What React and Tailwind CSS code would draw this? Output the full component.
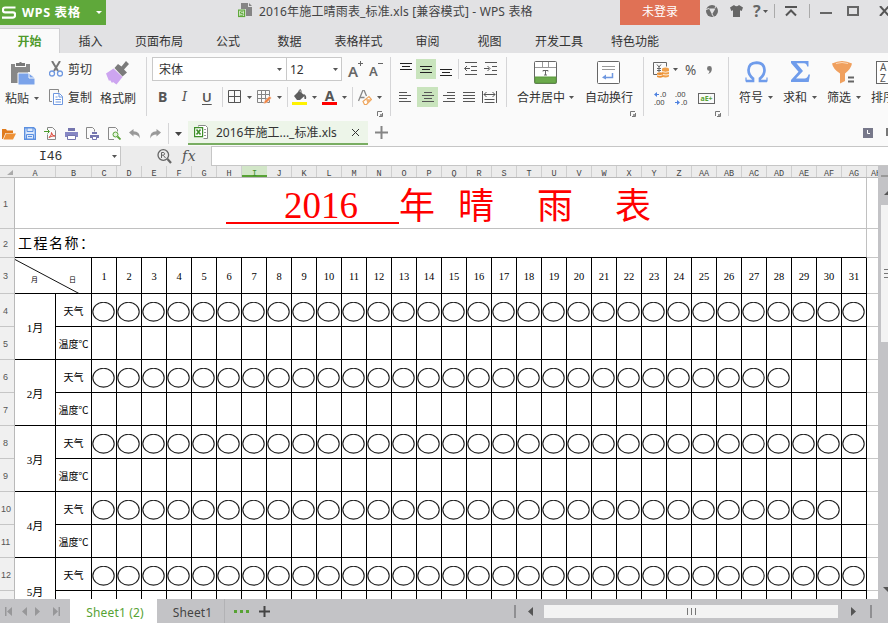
import clsx from 'clsx'

const MENU = [
  ['插入', 'w-[61px]'],
  ['页面布局', 'w-[76px]'],
  ['公式', 'w-[62px]'],
  ['数据', 'w-[61px]'],
  ['表格样式', 'w-[77px]'],
  ['审阅', 'w-[61px]'],
  ['视图', 'w-[63px]'],
  ['开发工具', 'w-[76px]'],
  ['特色功能', 'w-[76px]'],
]

const DAYS = Array.from({ length: 31 }, (_, i) => i + 1)

const LETTERS = [
  'C','D','E','F','G','H','I','J','K','L','M','N','O','P','Q','R','S','T',
  'U','V','W','X','Y','Z','AA','AB','AC','AD','AE','AF','AG',
]

const MONTHS = [
  { name: '1月', days: 31 },
  { name: '2月', days: 28 },
  { name: '3月', days: 31 },
  { name: '4月', days: 30 },
  { name: '5月', days: 31 },
]

const ROWS = [
  [1, 'h-[51px]'], [2, 'h-[29px]'], [3, 'h-[36px]'],
  ...[4, 5, 6, 7, 8, 9, 10, 11, 12].map(n => [n, 'h-[33px]']),
]

const Caret = ({ className }) => (
  <svg className={clsx('shrink-0', className)} width="5" height="3" viewBox="0 0 5 3"><path d="M0 0h5L2.5 3z" fill="#555"/></svg>
)

const Sep = ({ className }) => <div className={clsx('w-px shrink-0', className)}/>

const Corner = ({ className }) => (
  <svg className={clsx('shrink-0', className)} width="6" height="6" viewBox="0 0 6 6" fill="none" stroke="#777">
    <path d="M.5 5V.5H5M5.5 2v3.5H2"/><path d="M3 3h2v2H3z" fill="#999" stroke="none"/>
  </svg>
)

// horizontal strokes, each entry is [x, y, length]
const Lines = ({ rows, className, w = 13, h = 12, thick = 1, color = '#555', children }) => (
  <svg className={clsx('shrink-0', className)} width={w} height={h} viewBox={`0 0 ${w} ${h}`}>
    {rows.map(([x, y, len]) => <rect key={y + '-' + x} x={x} y={y} width={len} height={thick} fill={color}/>)}
    {children}
  </svg>
)

function TitleBar() {
  return (
    <div className="flex h-[28px] items-start">
      <div className="flex h-[25px] w-[106px] shrink-0 items-center bg-[#5fa83a] text-white">
        <svg className="ml-[2px] shrink-0" width="14" height="13" viewBox="0 0 14 13" fill="none" stroke="#fff" strokeWidth="2.2">
          <path d="M13.5 1.5H3Q1 1.5 1 3.5V4.5Q1 6.3 3 6.3H11Q13 6.3 13 8V9.5Q13 11.6 11 11.6H0"/>
        </svg>
        <span className="ml-[6px] w-[66px] shrink-0 whitespace-nowrap text-[12.5px] font-bold leading-[24px] tracking-[0.65px]">WPS 表格</span>
        <svg className="ml-[8px]" width="6" height="3" viewBox="0 0 6 3"><path d="M0 0h6L3 3z" fill="#fff"/></svg>
      </div>
      <svg className="ml-[132px] mt-[3px] shrink-0" width="15" height="15" viewBox="0 0 15 15">
        <path d="M3 0h7v4h4v9H8V6H3z" fill="#858585"/>
        <path d="M11 0l3 3h-3z" fill="#858585"/>
        <rect x=".6" y="7.1" width="6" height="6.4" fill="#e8f3e2" stroke="#5fa83a" strokeWidth="1.2"/>
        <path d="M5.5 8.8H2.5v1.6h2.5v1.8H1.8" fill="none" stroke="#5fa83a"/>
      </svg>
      <span className="ml-[6px] w-[361px] shrink-0 whitespace-nowrap text-[12px] leading-[23px] tracking-[0.16px] text-[#444]">2016年施工晴雨表_标准.xls [兼容模式] - WPS 表格</span>
      <div className="h-[25px] w-[80px] shrink-0 bg-[#e07155] text-center text-[12px] leading-[23px] text-white">未登录</div>
      <svg className="ml-[6px] mt-[5px] shrink-0" width="12" height="12" viewBox="0 0 12 12">
        <circle cx="6" cy="6" r="6" fill="#6d6d6d"/>
        <path d="M3 3.500h6.500L6 9.500z" fill="#e2e2e4"/>
        <path d="M0 4.500l3-1M9 3l1-2M6 9l1.500 2.500" stroke="#e2e2e4"/>
      </svg>
      <svg className="ml-[12px] mt-[5px] shrink-0" width="13" height="12" viewBox="0 0 13 12">
        <path d="M4 0Q6.500 2.400 9 0L13 2.500 11.700 6 10 5.300V12H3V5.300L1.300 6 0 2.500z" fill="#666"/>
      </svg>
      <span className="ml-[10px] w-[10px] shrink-0 text-[16px] font-bold leading-[23px] text-[#666]">?</span>
      <Caret className="mt-[10px]"/>
      <Sep className="ml-[6px] mt-[4px] h-[14px] bg-[#aaa]"/>
      <svg className="ml-[10px] mt-[6px] shrink-0" width="12" height="11" viewBox="0 0 12 11" fill="none" stroke="#555">
        <path d="M0 1h12" strokeWidth="2"/><path d="M1 9.500L6 4.500l5 5" strokeWidth="2"/>
      </svg>
      <Sep className="ml-[12px] mt-[4px] h-[14px] bg-[#aaa]"/>
      <div className="ml-[10px] mt-[12px] h-[2px] w-[12px] shrink-0 bg-[#666]"/>
      <div className="ml-[15px] mt-[6px] h-[10px] w-[12px] shrink-0 border-2 border-[#666]"/>
      <svg className="ml-[20px] mt-[6px] shrink-0" width="11" height="10" viewBox="0 0 11 10" stroke="#555" strokeWidth="2"><path d="M1 0l9 10M10 0L1 10"/></svg>
    </div>
  )
}

function MenuBar() {
  return (
    <div className="flex h-[25px] text-[12px] leading-[28px] text-[#333]">
      <div className="w-[60px] shrink-0 border-r border-t border-[#cfcfd1] bg-[#fafafa] text-center font-bold leading-[26px] text-[#4f9a2c]">开始</div>
      {MENU.map(([label, w]) => (
        <div key={label} className={clsx('shrink-0 whitespace-nowrap text-center', w)}>{label}</div>
      ))}
    </div>
  )
}

function ClipboardGroup() {
  return (
    <div className="flex w-[146px] shrink-0">
      <div className="w-[43px] shrink-0">
        <svg className="ml-[10px] mt-[9px]" width="26" height="24" viewBox="0 0 26 24">
          <path d="M1 2h4v3h11V2h4v8h-2v11H1z" fill="#878787"/>
          <path d="M6 1h3q1.500-2 3 0h3v3H6z" fill="#777"/>
          <path d="M8 11h11l6 5v7H8z" fill="#7ba3ea" stroke="#fafafa"/>
          <path d="M19 11v5h6" fill="none" stroke="#fafafa"/>
        </svg>
        <div className="ml-[5px] flex items-center text-[12px] leading-[25px]">粘贴<Caret className="ml-[5px]"/></div>
      </div>
      <div className="ml-[6px] w-[50px] shrink-0">
        <div className="mt-[5px] flex h-[22px] items-center text-[12px]">
          <svg width="14" height="16" viewBox="0 0 14 16" fill="none">
            <path d="M3 0l6 10M11 0L5 10" stroke="#777" strokeWidth="2"/>
            <circle cx="3" cy="12.500" r="2.500" stroke="#6f98e0" strokeWidth="1.300"/>
            <circle cx="11" cy="12.500" r="2.500" stroke="#6f98e0" strokeWidth="1.300"/>
          </svg>
          <span className="ml-[5px] pt-px">剪切</span>
        </div>
        <div className="mt-[6px] flex h-[23px] items-center text-[12px]">
          <svg width="15" height="17" viewBox="0 0 15 17" fill="none">
            <path d="M3 12.500H.5V.5h9v3" stroke="#888"/>
            <path d="M4.500 4.500h6l3 3v8h-9z" fill="#fff" stroke="#6f98e0"/>
            <path d="M10 4.500v3.500h3.500M6.500 8h2M6.500 10.500h5.500M6.500 13h5.500" stroke="#6f98e0"/>
          </svg>
          <span className="ml-[4px] pt-px">复制</span>
        </div>
      </div>
      <div className="w-[38px] shrink-0">
        <svg className="ml-[7px] mt-[8px]" width="24" height="24" viewBox="0 0 24 24">
          <path d="M15.500 5.500L20 0l3 3-5 5.500 3 3-4.500 4L8.500 7 12 3z" fill="#7b7b7b"/>
          <path d="M7.500 7.500l9 8.500-6 7.500L7 21l-1 1-2-3-1 1-3-7.500z" fill="#cda5f0"/>
        </svg>
        <div className="ml-px whitespace-nowrap text-[12px] leading-[27px]">格式刷</div>
      </div>
    </div>
  )
}

function FontGroup() {
  return (
    <div className="w-[243px] shrink-0">
      <div className="ml-[5px] mt-[4px] flex h-[24px]">
        <div className="flex w-[135px] items-center border border-[#c9c9c9] bg-white pl-[6px] pt-px text-[12px]">
          <span className="w-[118px]">宋体</span><Caret/>
        </div>
        <div className="-ml-px flex w-[56px] items-center border border-[#c9c9c9] bg-white pl-[3px] pt-px text-[12px]">
          <span className="w-[43px]">12</span><Caret/>
        </div>
        <span className="ml-[6px] w-[10px] text-[15px] font-semibold leading-[28px] text-[#666]">A</span>
        <svg className="mt-[4px]" width="5" height="5" viewBox="0 0 5 5" stroke="#666"><path d="M2.500 0v5M0 2.500h5"/></svg>
        <span className="ml-[6px] w-[9px] text-[13px] font-semibold leading-[29px] text-[#666]">A</span>
        <svg className="mt-[4px]" width="5" height="5" viewBox="0 0 5 5" stroke="#666"><path d="M0 2.500h5"/></svg>
      </div>
      <div className="mt-[4px] flex h-[24px] items-center text-[#555]">
        <span className="ml-[11px] w-[24px] text-[14px] font-bold leading-4">B</span>
        <span className="w-[20px] font-['DejaVu_Serif',serif] text-[13px] italic leading-4">I</span>
        <span className="w-[20px] text-[13px] font-semibold leading-4 underline underline-offset-2">U</span>
        <Sep className="h-[20px] bg-[#d5d5d7]"/>
        <svg className="ml-[5px] shrink-0" width="14" height="14" viewBox="0 0 14 14" fill="none" stroke="#555"><path d="M.5.5h12v12H.5zM6.500 0v13M0 6.500h13"/></svg>
        <Caret className="ml-[5px]"/>
        <svg className="ml-[5px] shrink-0" width="15" height="15" viewBox="0 0 15 15" fill="none">
          <path d="M.5.5h12v12H.5zM4.500 0v13M8.500 0v13M0 4.500h13M0 8.500h13" stroke="#858585"/>
          <path d="M6.500 14l1-3 5-5 2 2-5 5z" fill="#f08445" stroke="#fafafa" strokeWidth=".5"/>
        </svg>
        <Caret className="ml-[5px]"/>
        <Sep className="ml-[5px] h-[20px] bg-[#d5d5d7]"/>
        <svg className="ml-[4px] shrink-0" width="15" height="16" viewBox="0 0 15 16">
          <path d="M2 7l5-5 6 4.500-5 4.500H5z" fill="#5d5d5d"/>
          <path d="M7 5V1.500q2-2 2 .5V5" fill="none" stroke="#5d5d5d"/>
          <path d="M12 5q3 2 2 5h-1.500z" fill="#5d5d5d"/>
          <path d="M0 13h15v3H0z" fill="#fff200"/>
        </svg>
        <Caret className="ml-[5px]"/>
        <div className="ml-[5px] flex w-[15px] flex-col items-center">
          <span className="text-[14px] font-bold leading-[13px]">A</span>
          <div className="h-[3px] w-[15px] bg-[#f00]"/>
        </div>
        <Caret className="ml-[5px]"/>
        <Sep className="ml-[5px] h-[20px] bg-[#d5d5d7]"/>
        <svg className="ml-[5px] shrink-0" width="14" height="15" viewBox="0 0 14 15" fill="none">
          <path d="M.5 11L5 0h1l2.500 6M2.500 7.500h4" stroke="#888" strokeWidth="1.300"/>
          <path d="M5 11.500l6-5 2.500 3-5 5H6.500z" fill="#fff" stroke="#eea65e" strokeWidth="1.200"/>
          <path d="M8 9l5.500.5-4 4z" fill="#f1b070"/>
        </svg>
        <Caret className="ml-[5px]"/>
      </div>
      <Corner className="ml-[230px] mt-[2px]"/>
    </div>
  )
}

function AlignGroup() {
  const c = 'flex h-[20px] shrink-0 items-center justify-center'
  return (
    <div className="w-[115px] shrink-0">
      <div className="mt-[6px] flex h-[20px]">
        <Lines className="ml-[9px] mt-[4px]" color="#222" h={9} rows={[[0, 0, 12], [2, 3, 8], [0, 6, 12]]}/>
        <div className={clsx(c, 'ml-[3px] w-[20px] bg-[#c9e4bd]')}>
          <Lines color="#222" w={12} h={9} rows={[[0, 1, 12], [2, 4, 8], [0, 7, 12]]}/>
        </div>
        <Lines className="ml-[4px] mt-[10px]" color="#222" h={9} rows={[[0, 0, 12], [2, 3, 8], [0, 6, 12]]}/>
        <Sep className="ml-[5px] h-[20px] bg-[#d5d5d7]"/>
        <Lines className="ml-[5px] mt-[3px]" w={14} h={14} rows={[[1, 0, 12], [7, 4, 6], [7, 8, 6], [1, 12, 12]]}>
          <path d="M6 6.500H1M3 4L.5 6.500 3 9" stroke="#555" fill="none"/>
        </Lines>
        <Lines className="ml-[6px] mt-[3px]" w={14} h={14} rows={[[1, 0, 12], [8, 4, 5], [8, 8, 5], [1, 12, 12]]}>
          <path d="M0 6.500h5M3.500 4L6 6.500 3.500 9" stroke="#555" fill="none"/>
        </Lines>
      </div>
      <div className="mt-[8px] flex h-[20px] items-center">
        <Lines className="ml-[8px]" w={12} rows={[[0, 1, 8], [0, 4, 12], [0, 7, 8], [0, 10, 12]]}/>
        <div className={clsx(c, 'ml-[6px] w-[21px] bg-[#c9e4bd]')}>
          <Lines w={12} rows={[[2, 1, 8], [0, 4, 12], [2, 7, 8], [0, 10, 12]]}/>
        </div>
        <Lines className="ml-[5px]" w={12} rows={[[4, 1, 8], [0, 4, 12], [4, 7, 8], [0, 10, 12]]}/>
        <Lines className="ml-[8px]" w={12} rows={[[0, 1, 12], [0, 4, 12], [0, 7, 12], [0, 10, 12]]}/>
        <svg className="ml-[7px] shrink-0" width="15" height="12" viewBox="0 0 15 12" fill="none" stroke="#555">
          <path d="M.5 0v12M14.500 0v12M2 3.500h11M4.500 1L2 3.500 4.500 6M10.500 1L13 3.500 10.500 6M2.500 8.500h10M2.500 11.500h10"/>
        </svg>
      </div>
    </div>
  )
}

function CellGroup() {
  return (
    <div className="flex w-[136px] shrink-0">
      <div className="ml-[10px] w-[68px] shrink-0">
        <svg className="ml-[17px] mt-[8px]" width="23" height="23" viewBox="0 0 23 23" fill="none" stroke="#666">
          <rect x=".5" y=".5" width="22" height="22" rx="1" fill="#fff"/>
          <path d="M1 6.500h21M8.500 1v5M14.500 1v5" stroke="#999"/>
          <path d="M9 10.500V9.500h5V10.500M11.500 9.500V14M10 14h3"/>
          <path d="M1 16h21v6H1z" fill="#6ba94b" stroke="#5b9a3c"/>
        </svg>
        <div className="flex items-center whitespace-nowrap text-[12px] leading-[27px]">合并居中<Caret className="ml-[4px]"/></div>
      </div>
      <div className="w-[50px] shrink-0">
        <svg className="ml-[12px] mt-[8px]" width="23" height="23" viewBox="0 0 23 23" fill="none">
          <rect x=".5" y=".5" width="22" height="22" rx="1" fill="#fff" stroke="#666"/>
          <path d="M5 5.500h13M5 8.500h13" stroke="#999"/>
          <path d="M15.500 12v4.500H8" stroke="#6f98e0" strokeWidth="1.500"/><path d="M5 16.500l4-3v5z" fill="#6f98e0"/>
        </svg>
        <div className="whitespace-nowrap text-[12px] leading-[27px]">自动换行</div>
        <Corner className="ml-[45px]"/>
      </div>
    </div>
  )
}

function NumberGroup() {
  return (
    <div className="w-[84px] shrink-0">
      <div className="mt-[7px] flex h-[19px] items-center">
        <svg className="ml-[9px] shrink-0" width="17" height="16" viewBox="0 0 17 16" fill="none">
          <path d="M5 12.500H.5V.5h13v4M4 2.500l2 2.500 2-2.500M6 5v5M4 6.500h4M4 8.500h4" stroke="#666"/>
          <path d="M9 6.500q3.500-2 7 0v8q-3.500 2-7 0z" fill="#f0a04a"/>
          <path d="M4 11q3-1.500 6 0v4q-3 1.500-6 0z" fill="#ec9033"/>
          <path d="M9 9.500q3.500 1.500 7 0M10 12.500q3 1 6 0M4 13q3 1.200 5.500 0" stroke="#fff" strokeWidth=".8"/>
        </svg>
        <Caret className="ml-[3px]"/>
        <span className="ml-[7px] w-[22px] text-[13.5px] leading-4 text-[#555]">%</span>
        <svg width="5" height="8" viewBox="0 0 5 8"><path d="M0 2.500a2.300 2.300 0 114.800 0Q5 6.500 1 8q1.500-1.500 1.500-3.200A2.300 2.300 0 010 2.500z" fill="#777"/></svg>
      </div>
      <div className="mt-[9px] flex h-[20px] items-center">
        <div className="ml-[10px] w-[21px] text-[7.5px] leading-[8px] text-[#444]">
          <div className="flex items-center gap-px">
            <svg width="5" height="5" viewBox="0 0 5 5"><path d="M0 2.500L3 0v2h2v1H3v2z" fill="#4f82e0"/></svg>.0
          </div>
          <div>.00</div>
        </div>
        <div className="w-[23px] text-[7.5px] leading-[8px] text-[#444]">
          <div>.00</div>
          <div className="flex items-center gap-px">
            <svg width="5" height="5" viewBox="0 0 5 5"><path d="M5 2.500L2 0v2H0v1h2v2z" fill="#4f82e0"/></svg>.0
          </div>
        </div>
        <div className="flex h-[11px] w-[17px] items-center justify-center border border-[#666] text-[7px] font-bold leading-[9px] text-[#57a234]">aE+</div>
      </div>
      <Corner className="ml-[71px] mt-[3px]"/>
    </div>
  )
}

function BigButton({ label, caret = true, className, children }) {
  return (
    <div className={clsx('w-[44px] shrink-0', className)}>
      <div className="mt-[8px] h-[23px]">{children}</div>
      <div className="flex items-center whitespace-nowrap text-[12px] leading-[27px]">
        {label}{caret && <Caret className="ml-[5px]"/>}
      </div>
    </div>
  )
}

function Ribbon() {
  return (
    <div className="flex h-[68px] overflow-hidden bg-[#fafafa] text-[#333]">
      <ClipboardGroup/>
      <Sep className="mt-[4px] h-[59px] bg-[#d5d5d7]"/>
      <FontGroup/>
      <Sep className="mt-[4px] h-[59px] bg-[#d5d5d7]"/>
      <AlignGroup/>
      <Sep className="mt-[4px] h-[50px] bg-[#d5d5d7]"/>
      <CellGroup/>
      <Sep className="mt-[4px] h-[59px] bg-[#d5d5d7]"/>
      <NumberGroup/>
      <Sep className="mt-[4px] h-[59px] bg-[#d5d5d7]"/>
      <BigButton label="符号" className="ml-[10px]">
        <svg className="ml-[6px]" width="23" height="22" viewBox="0 0 23 22" fill="none" stroke="#6f9ceb">
          <path d="M1 20H8V17.500Q3.500 14 3.500 9 3.800 1.800 11.500 1.600 19.200 1.800 19.500 9 19.500 14 15 17.500V20H22" strokeWidth="2.700"/>
          <path d="M1 16.500v4M22 16.500v4" strokeWidth="1.200"/>
        </svg>
      </BigButton>
      <BigButton label="求和">
        <svg className="ml-[8px]" width="19" height="21" viewBox="0 0 19 21"><path d="M0 0h17.500v5.500h-1.300Q15.500 2.300 13 2.300H5.500L12 10 5 17.500h8.500q3 0 4-4H19L17.700 21H0v-2L7.500 10.800 0 2z" fill="#6f9ceb"/></svg>
      </BigButton>
      <BigButton label="筛选">
        <svg className="ml-[5px]" width="23" height="23" viewBox="0 0 23 23">
          <path d="M0 2.500Q10 -2.500 20 2.500 19 8 13 12.500V20l-5 2.500v-10Q1 8 0 2.500z" fill="#f0a05e"/>
          <path d="M4 2.500q6-2 12 0" fill="none" stroke="#fbd8b8"/>
          <path d="M16 16.500h6M16 20.500h6" stroke="#666" strokeWidth="2"/>
        </svg>
      </BigButton>
      <BigButton label="排序" caret={false}>
        <div className="ml-[5px] flex h-[23px] w-[24px] flex-col border border-[#666] bg-white pl-[3px] text-[10px] leading-[10.5px] text-[#555]"><span>A</span><span>Z</span></div>
      </BigButton>
    </div>
  )
}

function QuickBar() {
  return (
    <div className="flex h-[25px] bg-[#fafafa]">
      <div className="flex w-[188px] shrink-0 items-center">
        <svg className="ml-[2px] shrink-0" width="14" height="12" viewBox="0 0 14 12">
          <path d="M0 1h4l1 1.500h6V5H3.500L1 11H0z" fill="#e07b1c"/><path d="M4 5.500h10L11 11.500H1.500z" fill="#ee9136"/>
        </svg>
        <svg className="ml-[8px] shrink-0" width="12" height="13" viewBox="0 0 12 13" fill="none" stroke="#5b8fe0">
          <path d="M.7.7h9l1.600 1.600v10H.7z" fill="#dce9fb" strokeWidth="1.400"/><path d="M3 1v3.500h6V1M2.500 12V7.500h7V12M4 9.500h4"/>
        </svg>
        <svg className="ml-[8px] shrink-0" width="13" height="13" viewBox="0 0 13 13" fill="none">
          <path d="M3.500 3V.5h5l3 3v9h-8v-5" stroke="#888"/><path d="M0 4.500h5M3.500 2.500l2 2-2 2" stroke="#48992a"/>
          <path d="M5 10.500q3-2.500 2.500-5 .5 3.500 3.500 3.500-3-.5-6 1.500z" stroke="#dc4a3d"/>
        </svg>
        <svg className="ml-[8px] shrink-0" width="13" height="12" viewBox="0 0 13 12">
          <path d="M3 0h7v3H3z" fill="#7475ae"/><path d="M0 4h13v5H0z" fill="#8687c4"/><path d="M2.500 7.500h8v4h-8z" fill="#fff" stroke="#7475ae"/>
        </svg>
        <svg className="ml-[8px] shrink-0" width="14" height="13" viewBox="0 0 14 13">
          <path d="M3 11.500H.5V.5h6l2 2v2" fill="none" stroke="#888"/><path d="M6 5h5v2H6zM4 8h9v3H4z" fill="#7475ae"/><path d="M6.500 9.500h4v3h-4z" fill="#fff" stroke="#7475ae"/>
        </svg>
        <svg className="ml-[8px] shrink-0" width="13" height="13" viewBox="0 0 13 13" fill="none">
          <path d="M6 12.500H.5V.5h7l2 2v2" stroke="#888"/><circle cx="7.500" cy="7.500" r="2.500" fill="#e4f2de" stroke="#57a234"/><path d="M9.500 9.500l3 3" stroke="#57a234" strokeWidth="1.800"/>
        </svg>
        <svg className="ml-[8px] shrink-0" width="12" height="10" viewBox="0 0 12 10"><path d="M0 3.500L4.500 0v2.200q6.500 0 6.500 7.300Q9 5.500 4.500 5.500v2z" fill="#999"/></svg>
        <svg className="ml-[8px] shrink-0" width="12" height="10" viewBox="0 0 12 10"><path d="M12 3.500L7.500 0v2.200Q1 2.200 1 9.500q2-4 6.500-4v2z" fill="#999"/></svg>
        <Sep className="ml-[7px] h-[21px] bg-[#d5d5d7]"/>
        <svg className="ml-[6px]" width="7" height="4" viewBox="0 0 7 4"><path d="M0 0h7L3.500 4z" fill="#444"/></svg>
      </div>
      <div className="mb-px flex w-[180px] shrink-0 items-center border-b-2 border-[#79ad62] bg-[#edf5e9]">
        <svg className="ml-[6px] shrink-0" width="14" height="14" viewBox="0 0 14 14" fill="none">
          <path d="M4.500 1.500V.5h7l2 2v11h-4" fill="#fff" stroke="#888"/>
          <path d="M10 4.500h2M10 7.500h2M10 10.500h2" stroke="#999"/>
          <path d="M.6 2.600h8v9h-8z" fill="#fff" stroke="#3f8f2a" strokeWidth="1.200"/><path d="M2.500 4.500l4 5M6.500 4.500l-4 5" stroke="#3f8f2a" strokeWidth="1.600"/>
        </svg>
        <span className="ml-[8px] w-[135px] whitespace-nowrap pt-px text-[12px] leading-5 text-[#333]">2016年施工..._标准.xls</span>
        <svg width="9" height="9" viewBox="0 0 9 9" stroke="#333"><path d="M1 1l7 7M8 1L1 8"/></svg>
      </div>
      <svg className="ml-[7px] mt-[5px] shrink-0" width="13" height="13" viewBox="0 0 13 13" stroke="#858585" strokeWidth="2"><path d="M6.500 0v13M0 6.500h13"/></svg>
      <svg className="ml-[475px] mt-[7px] shrink-0" width="10" height="10" viewBox="0 0 10 10"><path d="M0 0h10v10H0z" fill="#77788a"/><path d="M4.500 2v3.500H7" fill="none" stroke="#fff"/></svg>
      <div className="ml-[13px] mt-[7px] h-[8px] w-[2px] bg-[#777]"/>
    </div>
  )
}

function FormulaBar() {
  return (
    <div className="flex h-[20px] bg-[#ececec]">
      <div className="flex w-[121px] shrink-0 items-center border border-l-0 border-[#c6c6c6] bg-white">
        <span className="w-[112px] pl-[39px] pt-[2px] font-['Liberation_Mono',monospace] text-[13px] leading-[18px] text-[#333]">I46</span><Caret/>
      </div>
      <svg className="ml-[36px] mt-[3px] shrink-0" width="15" height="15" viewBox="0 0 15 15" fill="none" stroke="#666">
        <circle cx="6.300" cy="6" r="5.300" strokeWidth="1.300"/><path d="M10.500 10l3.500 4" strokeWidth="2.200"/><path d="M4.500 9V3.500h2.300q1.700 1.300 0 2.700H4.500M6.500 6.500L8.500 9"/>
      </svg>
      <span className="ml-[10px] w-[29px] font-['DejaVu_Serif',serif] text-[14px] italic leading-[21px] tracking-[0.5px] text-[#555]">fx</span>
      <div className="flex-1 border border-r-0 border-[#c6c6c6] bg-white"/>
    </div>
  )
}

function ColumnHeads() {
  return (
    <div className="flex h-[12px] w-[878px] overflow-hidden border-b border-[#b9b9b9] bg-[#ececec] font-['Liberation_Mono',monospace] text-[8.500px] font-medium leading-[16px] text-[#444]">
      <div className="flex w-[15px] shrink-0 items-end justify-end pb-[2px] pr-[2px]">
        <svg width="6" height="5" viewBox="0 0 6 5"><path d="M6 0v5H0z" fill="#aaa"/></svg>
      </div>
      <div className="w-[41px] shrink-0 border-r border-[#cfcfcf] text-center">A</div>
      <div className="w-[36px] shrink-0 border-r border-[#cfcfcf] text-center">B</div>
      {LETTERS.map(l => (
        <div key={l} className={clsx('w-[25px] shrink-0 text-center',
          l === 'I' ? 'border-b-2 border-[#57a234] bg-[#d2e6c8] text-[#3f8f2a]' : 'border-r border-[#cfcfcf]')}>{l}</div>
      ))}
      <div className="w-[11px] shrink-0 overflow-hidden pl-[4px]">AH</div>
    </div>
  )
}

function MonthBlock({ name, days }) {
  return (
    <div className="flex h-[66px] shrink-0">
      <div className="flex w-[41px] shrink-0 items-center justify-center border-b border-r border-black pt-[3px] text-[11px]">{name}</div>
      <div>
        <div className="flex h-[33px]">
          <div className="flex w-[36px] shrink-0 items-center justify-center border-b border-r border-black pt-[3px] text-[10px]">天气</div>
          {DAYS.map(d => (
            <div key={d} className="w-[25px] shrink-0 border-b border-r border-black pt-[8px]">
              {d <= days && (
                <svg width="23" height="20" viewBox="0 0 23 20"><ellipse cx="11.500" cy="9.700" rx="10.700" ry="9.400" fill="none" stroke="#222" strokeWidth="1.100"/></svg>
              )}
            </div>
          ))}
        </div>
        <div className="flex h-[33px]">
          <div className="flex w-[36px] shrink-0 items-center justify-center whitespace-nowrap border-b border-r border-black pt-[3px] text-[10px]">温度℃</div>
          {DAYS.map(d => <div key={d} className="w-[25px] shrink-0 border-b border-r border-black"/>)}
        </div>
      </div>
    </div>
  )
}

function Sheet() {
  return (
    <div className="flex h-[421px] w-[878px] overflow-hidden bg-white">
      <div className="w-[15px] shrink-0 border-r border-[#b9b9b9] bg-[#f0f0f0] font-['Liberation_Sans',sans-serif] text-[9px] text-[#555]">
        {ROWS.map(([n, h]) => (
          <div key={n} className={clsx('flex items-center border-b border-[#c6c6c6] pt-[3px]', h, n < 10 ? 'pl-[3px]' : 'pl-px')}>{n}</div>
        ))}
      </div>
      <div className="flex w-[852px] shrink-0 flex-col font-['Liberation_Serif','Noto_Sans_CJK_SC',serif] text-black">
        <div className="flex h-[51px] shrink-0 border-b border-r border-[#c0c0c0] pl-[211px] text-[36px] text-[#f00]">
          <div className="mt-[3px] h-[43px] w-[173px] border-b-2 border-[#f00] pl-[58px] text-[37px] leading-[50px]">2016</div>
          <span className="w-[59px] leading-[59px]">年</span>
          <span className="w-[79px] leading-[59px]">晴</span>
          <span className="w-[78px] leading-[59px]">雨</span>
          <span className="leading-[59px]">表</span>
        </div>
        <div className="h-[29px] shrink-0 border-b border-r border-b-black border-r-[#c0c0c0] pl-[3px] text-[14px] leading-[30px] tracking-[1.5px]">工程名称：</div>
        <div className="flex h-[36px] shrink-0">
          <div className="relative flex w-[77px] shrink-0 border-b border-r border-black text-[7px] leading-[44px]">
            <svg className="absolute left-0 top-0" width="76" height="36" viewBox="0 0 76 36"><path d="M0 1.500L64 35.500" stroke="#111"/></svg>
            <span className="ml-[16px] w-[38px]">月</span><span>日</span>
          </div>
          {DAYS.map(d => (
            <div key={d} className="flex w-[25px] shrink-0 items-center justify-center border-b border-r border-black pt-[3px] text-[10.5px]">{d}</div>
          ))}
        </div>
        {MONTHS.map(m => <MonthBlock key={m.name} {...m}/>)}
      </div>
      <div className="w-[11px] shrink-0">
        {ROWS.map(([n, h]) => <div key={n} className={clsx('border-b border-[#c6c6c6]', h)}/>)}
      </div>
    </div>
  )
}

function VerticalBar() {
  return (
    <div className="w-[10px] shrink-0 bg-[#c3c3c6]">
      <div className="ml-[3px] mt-[9px] h-[2px] bg-[#999]"/>
      <svg className="ml-[6px] mt-[13px]" width="4" height="6" viewBox="0 0 4 6"><path d="M5 0v5H0z" fill="#555"/></svg>
      <div className="ml-[3px] mt-[9px] h-[137px] bg-[#f3f3f3] pl-[3px] pt-[64px]">
        <div className="h-[9px] border-y border-[#777] pt-[3px]"><div className="h-px bg-[#777]"/></div>
      </div>
      <svg className="ml-[5px] mt-[245px]" width="5" height="6" viewBox="0 0 5 6"><path d="M0 0h5v5z" fill="#555"/></svg>
    </div>
  )
}

function BottomBar() {
  return (
    <div className="flex h-[24px] items-center bg-[#c3c3c6] text-[12px] text-[#444]">
      <svg className="shrink-0" width="70" height="24" viewBox="0 0 70 24" fill="#979799">
        <path d="M5 8h1.500v9H5zM12 8v9l-5-4.500zM27 8v9l-5-4.500zM35 8l5 4.500-5 4.500zM53 8l5 4.500L53 17zM58.500 8H60v9h-1.500z"/>
      </svg>
      <div className="h-full w-[87px] bg-white pl-[3px] text-center leading-[27px] tracking-[0.15px] text-[#57a234]">Sheet1 (2)</div>
      <div className="h-full w-[68px] border-r border-[#b2b2b5] pl-[4px] text-center leading-[27px] tracking-[0.1px]">Sheet1</div>
      <svg className="ml-[9px]" width="15" height="3" viewBox="0 0 15 3" fill="#57a234"><path d="M0 0h3v3H0zM6 0h3v3H6zM12 0h3v3h-3z"/></svg>
      <svg className="ml-[10px] shrink-0" width="11" height="11" viewBox="0 0 11 11" stroke="#444" strokeWidth="2"><path d="M5.500 0v11M0 5.500h11"/></svg>
      <div className="ml-[244px] h-[13px] w-[2px] bg-[#8f8f92]"/>
      <svg className="ml-[12px]" width="5" height="9" viewBox="0 0 5 9"><path d="M5 0v9L0 4.500z" fill="#555"/></svg>
      <div className="ml-[11px] flex h-[13px] w-[294px] items-center justify-center gap-[3px] bg-[#f3f3f3]">
        {[0, 1, 2].map(i => <div key={i} className="h-[7px] w-px bg-[#777]"/>)}
      </div>
      <svg className="ml-[13px]" width="5" height="9" viewBox="0 0 5 9"><path d="M0 0v9l5-4.500z" fill="#555"/></svg>
      <div className="ml-[14px] h-[13px] w-[2px] bg-[#8f8f92]"/>
    </div>
  )
}

export default function App() {
  return (
    <div className="h-[623px] w-[888px] overflow-hidden bg-[#e2e2e4] font-['Noto_Sans','Noto_Sans_CJK_SC',sans-serif]">
      <TitleBar/>
      <MenuBar/>
      <Ribbon/>
      <QuickBar/>
      <FormulaBar/>
      <div className="flex h-[433px]">
        <div className="shrink-0">
          <ColumnHeads/>
          <Sheet/>
        </div>
        <VerticalBar/>
      </div>
      <BottomBar/>
    </div>
  )
}
